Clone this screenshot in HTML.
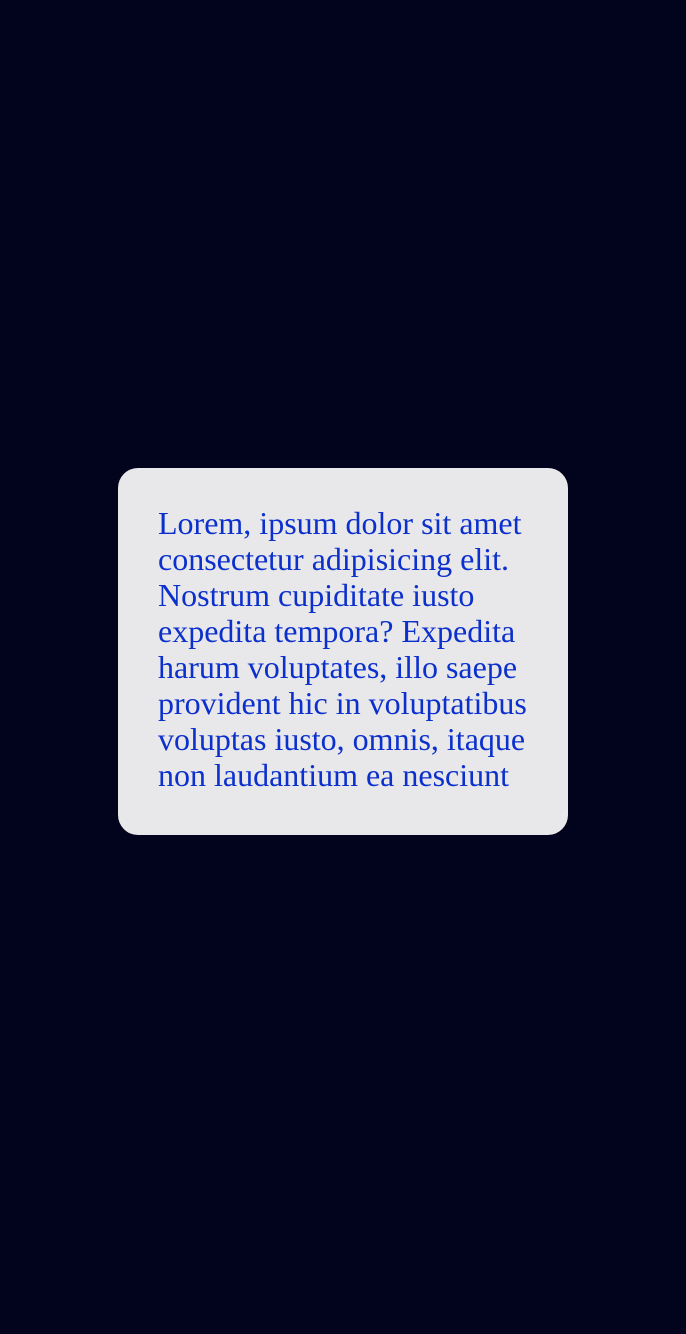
<!DOCTYPE html>
<html><head><meta charset="utf-8"><style>
html,body{margin:0;padding:0;}
body{width:686px;height:1334px;background:#02031c;position:relative;overflow:hidden;}
.card{position:absolute;left:118px;top:468px;width:450px;height:367px;box-sizing:border-box;background:#e8e7ea;border-radius:20px;padding:37px 10px 0 40px;}
p{margin:0;font-family:"Liberation Serif",serif;font-size:32px;line-height:36px;color:#0b30cc;white-space:nowrap;}
</style></head><body>
<div class="card"><p>Lorem, ipsum dolor sit amet<br>consectetur adipisicing elit.<br>Nostrum cupiditate iusto<br>expedita tempora? Expedita<br>harum voluptates, illo saepe<br>provident hic in voluptatibus<br>voluptas iusto, omnis, itaque<br>non laudantium ea nesciunt</p></div>
</body></html>
